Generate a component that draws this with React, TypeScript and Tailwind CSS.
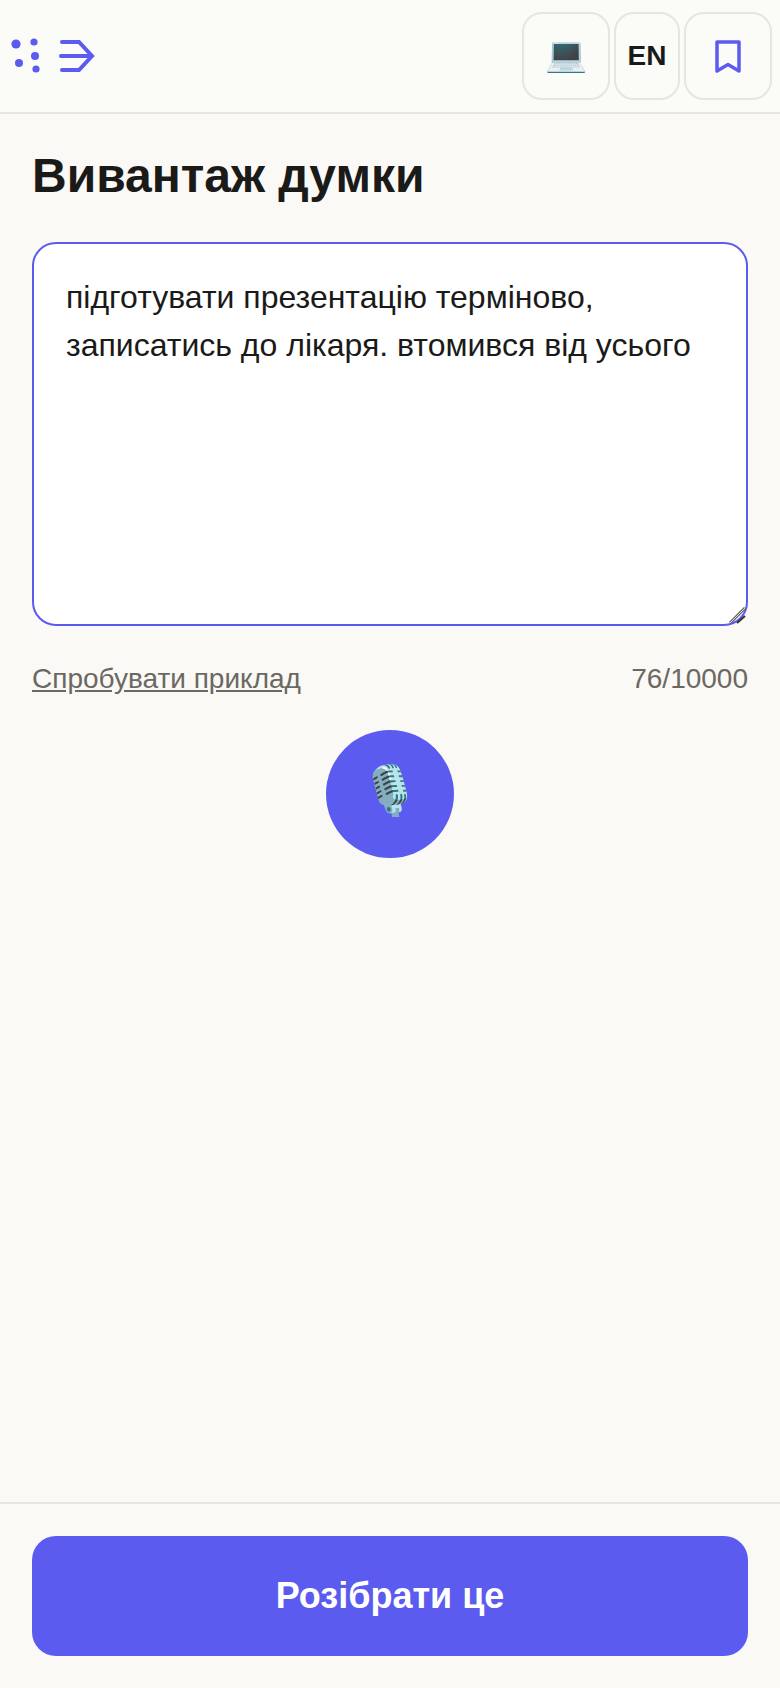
import { useState } from "react";

const sans = "font-['Liberation_Sans',Arial,sans-serif]";

function LogoMark() {
  return (
    <svg width="90" height="50" viewBox="0 0 90 50" fill="none" className="ml-[10px]">
      <g fill="#5b5bf0">
        <circle cx="6" cy="13" r="4.6" />
        <circle cx="24" cy="11" r="3.6" />
        <circle cx="25" cy="25" r="4" />
        <circle cx="9" cy="32" r="4" />
        <circle cx="26" cy="38" r="3.6" />
      </g>
      <path
        d="M52 11h17l13 14-13 14H52M51 25h31"
        stroke="#5b5bf0"
        strokeWidth="4"
        strokeLinecap="round"
        strokeLinejoin="miter"
      />
    </svg>
  );
}

function HeaderButton({ wide, children }: { wide?: boolean; children: React.ReactNode }) {
  return (
    <button
      className={`flex h-[88px] items-center justify-center rounded-[20px] border-2 border-[#e7e5e0] ${
        wide ? "w-[88px]" : "w-[66px]"
      }`}
    >
      {children}
    </button>
  );
}

export default function App() {
  const [text, setText] = useState(
    "підготувати презентацію терміново, записатись до лікаря. втомився від усього"
  );

  return (
    <div className={`flex h-[1688px] flex-col bg-[#faf9f6] text-[#1a1a18] ${sans}`}>
      <header className="flex h-[114px] shrink-0 items-center justify-between border-b-2 border-[#e7e5e0] bg-[#fbfbf7] pr-[8px]">
        <LogoMark />
        <div className="flex gap-[4px]">
          <HeaderButton wide>
            <span className="pb-[4px] text-[34px] leading-none">💻</span>
          </HeaderButton>
          <HeaderButton>
            <span className="text-[28px] font-bold">EN</span>
          </HeaderButton>
          <HeaderButton wide>
            <svg width="26" height="33" viewBox="0 0 26 33" fill="none">
              <path
                d="M2 2h22v29l-11-6.500-11 6.500z"
                stroke="#5b5bf0"
                strokeWidth="3.500"
                strokeLinejoin="round"
              />
            </svg>
          </HeaderButton>
        </div>
      </header>

      <main className="flex flex-1 flex-col px-[32px]">
        <h1 className="mt-[34px] text-[48px] leading-[56px] font-bold">Вивантаж думки</h1>
        <div className="relative mt-[38px] h-[384px]">
          <textarea
            value={text}
            onChange={(e) => setText(e.target.value)}
            className="h-full w-full resize-none rounded-[24px] border-2 border-[#5b5bf0] bg-white px-[32px] pt-[29px] pb-[24px] text-[32px] leading-[48px] text-[#1a1a18] outline-none"
          />
          <svg width="18" height="18" viewBox="0 0 18 18" fill="none" className="absolute right-[2px] bottom-[2px]">
            <path d="M2 17L17 2" stroke="#666" strokeWidth="3" />
            <path d="M2 17L17 2" stroke="#ddd" strokeWidth="1" />
            <path d="M9 17L17 10" stroke="#333" strokeWidth="2" />
          </svg>
        </div>
        <div className="mt-[37px] flex items-center justify-between text-[28px] leading-[32px] text-[#6b6862]">
          <a className="underline">Спробувати приклад</a>
          <span>76/10000</span>
        </div>
        <button className="mx-auto mt-[35px] flex h-[128px] w-[128px] items-center justify-center rounded-full bg-[#5b5bf0]">
          <span className="pb-[6px] text-[48px] leading-none">🎙️</span>
        </button>
      </main>

      <footer className="shrink-0 border-t-2 border-[#e7e5e0] bg-[#faf9f6] p-[32px]">
        <button className="h-[120px] w-full rounded-[24px] bg-[#5b5bf0] text-[36px] font-bold text-white">
          Розібрати це
        </button>
      </footer>
    </div>
  );
}
